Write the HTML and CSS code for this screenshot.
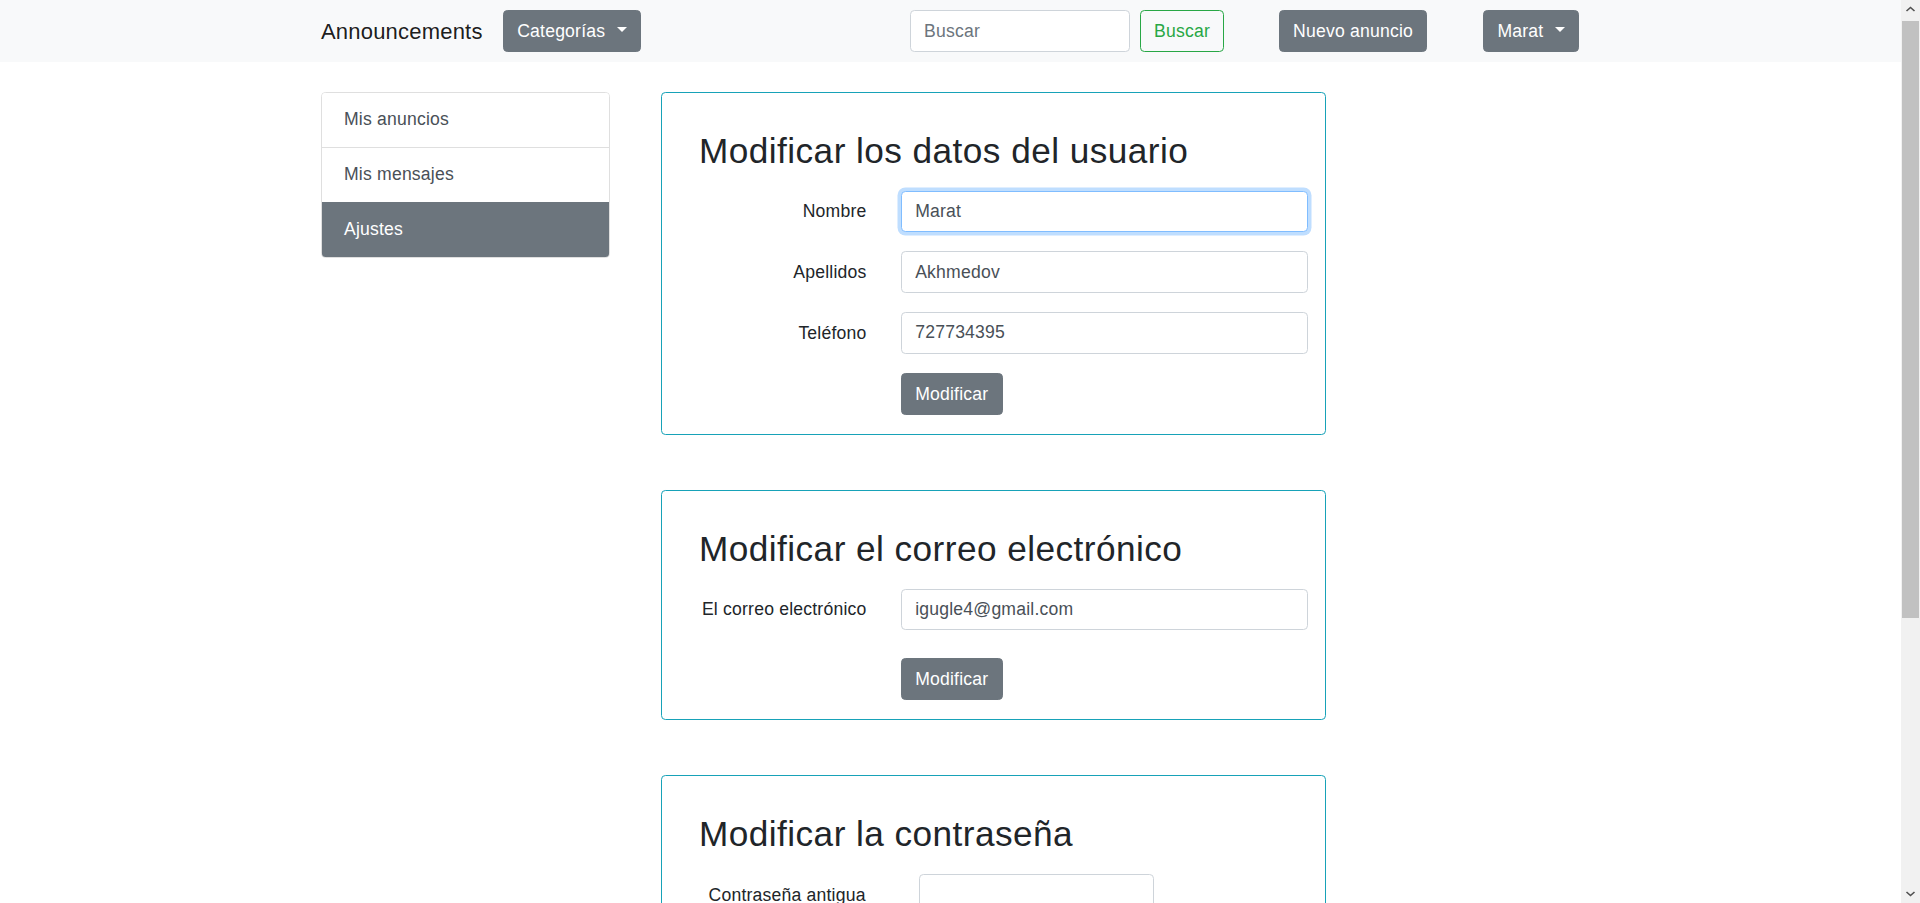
FILE: index.html
```html
<!DOCTYPE html>
<html lang="es">
<head>
<meta charset="utf-8">
<title>Announcements - Ajustes</title>
<link rel="stylesheet" href="styles.css">
</head>
<body>
<nav class="navbar">
  <div class="nav-inner">
    <a class="brand" href="#">Announcements</a>
    <button class="btn btn-secondary dropdown-toggle" type="button">Categorías</button>
    <form class="search-form">
      <input class="form-control search-input" type="search" placeholder="Buscar">
      <button class="btn btn-outline-success" type="button">Buscar</button>
    </form>
    <button class="btn btn-secondary new-ad" type="button">Nuevo anuncio</button>
    <button class="btn btn-secondary dropdown-toggle user-btn" type="button">Marat</button>
  </div>
</nav>

<main class="page">
  <aside class="list-group">
    <a class="list-item" href="#">Mis anuncios</a>
    <a class="list-item" href="#">Mis mensajes</a>
    <a class="list-item active" href="#">Ajustes</a>
  </aside>

  <section class="content">
    <div class="card">
      <h2 class="card-title">Modificar los datos del usuario</h2>
      <div class="form-grid">
        <label class="form-label">Nombre</label>
        <input class="form-control focused" type="text" value="Marat">
        <label class="form-label">Apellidos</label>
        <input class="form-control" type="text" value="Akhmedov">
        <label class="form-label">Teléfono</label>
        <input class="form-control" type="text" value="727734395">
        <span></span>
        <div><button class="btn btn-secondary" type="button">Modificar</button></div>
      </div>
    </div>

    <div class="card">
      <h2 class="card-title">Modificar el correo electrónico</h2>
      <div class="form-grid">
        <label class="form-label">El correo electrónico</label>
        <input class="form-control" type="text" value="igugle4@gmail.com">
        <span></span>
        <div class="btn-row-wide"><button class="btn btn-secondary" type="button">Modificar</button></div>
      </div>
    </div>

    <div class="card">
      <h2 class="card-title">Modificar la contraseña</h2>
      <div class="form-grid pass-grid">
        <label class="form-label">Contraseña antigua</label>
        <input class="form-control" type="password">
        <label class="form-label">Contraseña nueva</label>
        <input class="form-control" type="password">
        <label class="form-label">Repita la contraseña</label>
        <input class="form-control" type="password">
        <span></span>
        <div><button class="btn btn-secondary" type="button">Modificar</button></div>
      </div>
    </div>
  </section>
</main>

<div class="scrollbar" aria-hidden="true">
  <div class="sb-arrow">
    <svg width="19" height="19" viewBox="0 0 19 19"><path d="M5.5 11 L9.5 7.5 L13.5 11" fill="none" stroke="#505050" stroke-width="1.6"/></svg>
  </div>
  <div class="sb-track">
    <div class="sb-thumb"></div>
  </div>
  <div class="sb-arrow">
    <svg width="19" height="19" viewBox="0 0 19 19"><path d="M5.5 8 L9.5 11.5 L13.5 8" fill="none" stroke="#505050" stroke-width="1.6"/></svg>
  </div>
</div>
</body>
</html>
```

FILE: styles.css
```css
* {
  box-sizing: border-box;
}

body {
  margin: 0;
  font-family: "Liberation Sans", Arial, sans-serif;
  font-size: 17.6px;
  line-height: 26.4px;
  letter-spacing: 0.2px;
  color: #212529;
  background: #fff;
}

/* ---------- fake browser scrollbar ---------- */
.scrollbar {
  position: fixed;
  top: 0;
  right: 0;
  width: 19px;
  height: 100vh;
  background: #f1f1f1;
  display: flex;
  flex-direction: column;
}

.sb-arrow {
  height: 19px;
  flex: none;
}

.sb-arrow svg {
  display: block;
}

.sb-track {
  flex: 1;
  padding: 2px 1px 0 1px;
}

.sb-thumb {
  height: 597px;
  background: #c1c1c1;
}

/* ---------- navbar ---------- */
.navbar {
  background: #f8f9fa;
  height: 62.3px;
  padding: 9.15px 0;
}

.nav-inner {
  margin-left: 321px;
  display: flex;
  align-items: center;
  height: 44px;
}

.brand {
  width: 164.4px;
  margin-right: 17.6px;
  font-size: 22px;
  line-height: 33px;
  color: rgba(0, 0, 0, 0.9);
  text-decoration: none;
  white-space: nowrap;
}

.btn {
  display: inline-block;
  font-family: inherit;
  font-size: 17.6px;
  line-height: 26.4px;
  letter-spacing: 0.2px;
  padding: 7px 13.2px;
  border: 1px solid transparent;
  border-radius: 4.4px;
  cursor: pointer;
  white-space: nowrap;
}

.btn-secondary {
  background: #6c757d;
  border-color: #6c757d;
  color: #fff;
}

.btn-outline-success {
  background: transparent;
  border-color: #28a745;
  color: #28a745;
}

.dropdown-toggle::after {
  content: "";
  display: inline-block;
  margin-left: 11.5px;
  vertical-align: 4.5px;
  border-top: 5.3px solid;
  border-right: 5.3px solid transparent;
  border-left: 5.3px solid transparent;
  border-bottom: 0;
}

.search-form {
  display: flex;
  align-items: center;
  margin: 0 0 0 269px;
}

.form-control {
  display: block;
  height: 41.6px;
  padding: 6.6px 13.2px;
  font-family: inherit;
  font-size: 17.6px;
  line-height: 26.4px;
  letter-spacing: 0.2px;
  color: #495057;
  background: #fff;
  border: 1px solid #ced4da;
  border-radius: 4.4px;
  outline: none;
}

.form-control::placeholder {
  color: #6c757d;
}

.search-input {
  width: 220px;
  height: 42.4px;
  margin-right: 10px;
}

.new-ad {
  margin-left: 54.6px;
}

.user-btn {
  margin-left: 56px;
}

/* ---------- page ---------- */
.page {
  display: flex;
  align-items: flex-start;
  margin-left: 321px;
  padding-top: 29.3px;
  padding-bottom: 191px;
}

.list-group {
  width: 288.5px;
  border: 1px solid #dfdfdf;
  border-radius: 4.4px;
  overflow: hidden;
  display: flex;
  flex-direction: column;
}

.list-item {
  display: block;
  padding: 13.8px 22px;
  color: #495057;
  text-decoration: none;
  background: #fff;
}

.list-item + .list-item {
  border-top: 1px solid #dfdfdf;
}

.list-item.active {
  background: #6c757d;
  border-top-color: #6c757d;
  color: #fff;
}

.content {
  margin-left: 51.5px;
  display: flex;
  flex-direction: column;
  gap: 55px;
}

.card {
  width: 665px;
  border: 1px solid #17a2b8;
  border-radius: 4.4px;
  padding: 37px 17px 18.6px 37px;
}

.card-title {
  margin: 0 0 19px;
  font-size: 35.2px;
  line-height: 42.24px;
  font-weight: 500;
  letter-spacing: 0.45px;
  color: #212529;
}

.form-grid {
  display: grid;
  grid-template-columns: 167.5px 407px;
  column-gap: 34.5px;
  row-gap: 19px;
  align-items: center;
}

.form-label {
  text-align: right;
  white-space: nowrap;
}

.form-grid .form-control {
  width: 100%;
}

.focused {
  border-color: #80bdff;
  box-shadow: 0 0 0 3.5px rgba(0, 123, 255, 0.25);
}

.btn-row-wide {
  margin-top: 8.3px;
}

.pass-grid {
  grid-template-columns: 210px 235.5px;
  column-gap: 9.5px;
}

.pass-grid .form-label {
  text-align: left;
  padding-left: 9.5px;
}
```
